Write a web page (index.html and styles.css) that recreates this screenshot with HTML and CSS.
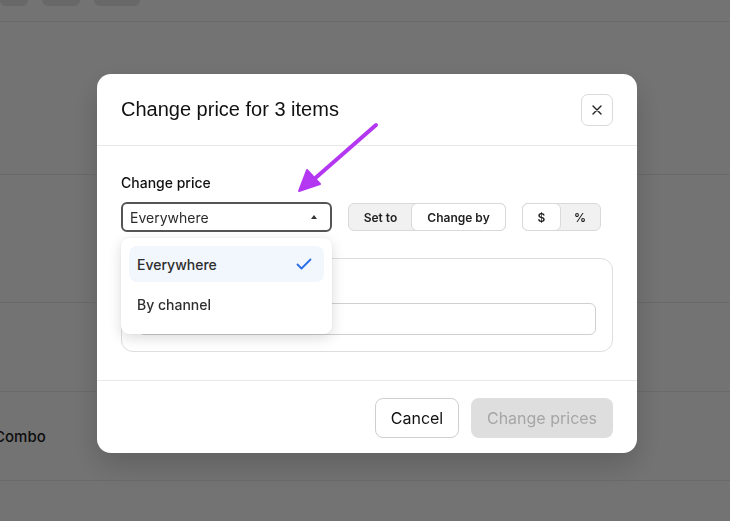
FILE: index.html
```html
<!DOCTYPE html>
<html lang="en">

<head>
    <meta charset="UTF-8" />
    <meta name="viewport" content="width=device-width, initial-scale=1.0" />
    <title>Change price</title>
    <link rel="stylesheet" href="styles.css">
</head>

<body>
    <div class="page">
        <div class="toolbar">
            <span class="pill pill-a"></span>
            <span class="pill pill-b"></span>
            <span class="pill pill-c"></span>
        </div>
        <div class="row row-1"></div>
        <div class="row row-2"></div>
        <div class="row row-3"></div>
        <div class="row row-4"><span class="row-name">Combo</span></div>
        <div class="row row-5"></div>
    </div>

    <div class="overlay">
        <div class="modal">
            <div class="modal-header">
                <h2>Change price for 3 items</h2>
                <button class="btn-close">
                    <svg width="10" height="10" viewBox="0 0 10 10"><path d="M1 1L9 9M9 1L1 9" stroke="#222" stroke-width="1.4" stroke-linecap="round"/></svg>
                </button>
            </div>

            <div class="modal-body">
                <label class="field-label">Change price</label>
                <div class="controls">
                    <div class="select-wrap">
                        <div class="select">
                            <span>Everywhere</span>
                            <svg width="6" height="4" viewBox="0 0 6 4"><path d="M0 4L3 0L6 4Z" fill="#333"/></svg>
                        </div>
                        <div class="dropdown">
                            <div class="option selected">
                                <span>Everywhere</span>
                                <svg width="16" height="12" viewBox="0 0 16 12"><path d="M1.5 6.5L5.5 10.5L14.5 1.5" fill="none" stroke="#2a6de6" stroke-width="1.8" stroke-linecap="round" stroke-linejoin="round"/></svg>
                            </div>
                            <div class="option">By channel</div>
                        </div>
                    </div>

                    <div class="segmented">
                        <span class="seg seg-set">Set to</span>
                        <span class="seg seg-by active">Change by</span>
                    </div>

                    <div class="segmented">
                        <span class="seg seg-dollar active">$</span>
                        <span class="seg seg-pct">%</span>
                    </div>
                </div>

                <div class="amount-card">
                    <div class="amount-label">Amount</div>
                    <div class="amount-input"></div>
                </div>
            </div>

            <div class="modal-footer">
                <button class="btn-cancel">Cancel</button>
                <button class="btn-submit" disabled>Change prices</button>
            </div>
        </div>

        <svg class="pointer" width="100" height="80" viewBox="0 0 100 80">
            <path d="M80 4L16 60" stroke="#b437f2" stroke-width="4" stroke-linecap="round"/>
            <path d="M3 70L11 49L24 63Z" fill="#b437f2" stroke="#b437f2" stroke-width="2" stroke-linejoin="round"/>
        </svg>
    </div>
</body>

</html>
```

FILE: styles.css
```css
* {
    box-sizing: border-box;
    margin: 0;
    padding: 0;
    font-family: Inter, "Noto Sans", Arial, sans-serif;
}

body {
    background-color: #ffffff;
    width: 730px;
    height: 521px;
    overflow: hidden;
}

/* page behind the modal */
.page {
    width: 100%;
}

.toolbar {
    height: 22px;
    border-bottom: 1px solid #ebebeb;
    display: flex;
    gap: 14px;
    align-items: flex-start;
}

.pill {
    display: block;
    height: 6px;
    background-color: #e6e6e6;
    border-radius: 0 0 8px 8px;
}

.pill-a {
    width: 28px;
}

.pill-b {
    width: 38px;
}

.pill-c {
    width: 46px;
}

.row {
    border-bottom: 1px solid #ebebeb;
    display: flex;
    align-items: center;
}

.row-1 {
    height: 153px;
}

.row-2 {
    height: 128px;
}

.row-3 {
    height: 89px;
}

.row-4 {
    height: 89px;
}

.row-5 {
    height: 60px;
    border-bottom: none;
}

.row-name {
    margin-left: -6px;
    font-size: 15px;
    font-weight: 500;
    color: #1d1d1d;
}

/* modal */
.overlay {
    position: fixed;
    top: 0;
    left: 0;
    width: 100%;
    height: 100%;
    background-color: rgba(0, 0, 0, 0.55);
    padding: 74px 0 0 97px;
}

.modal {
    width: 540px;
    background: #fff;
    border-radius: 14px;
    box-shadow: 0 12px 30px rgba(0, 0, 0, 0.18);
}

.modal-header {
    height: 72px;
    display: flex;
    align-items: center;
    justify-content: space-between;
    padding: 0 24px;
    border-bottom: 1px solid #e8e8e8;
}

.modal-header h2 {
    font-family: "Liberation Sans", Arial, sans-serif;
    font-size: 20px;
    font-weight: 400;
    color: #111;
}

.btn-close {
    width: 32px;
    height: 32px;
    border: 1px solid #dadada;
    border-radius: 7px;
    background: #fff;
    display: flex;
    align-items: center;
    justify-content: center;
}

.modal-body {
    padding: 27px 24px 28px 24px;
    border-bottom: 1px solid #e8e8e8;
}

.field-label {
    display: block;
    font-size: 14px;
    line-height: 20px;
    font-weight: 500;
    color: #111;
    margin-bottom: 9px;
}

.controls {
    display: flex;
    align-items: center;
    gap: 16px;
}

.select-wrap {
    position: relative;
}

.select {
    width: 211px;
    height: 30px;
    border: 2px solid #555;
    border-radius: 6px;
    display: flex;
    align-items: center;
    justify-content: space-between;
    padding: 0 13px 0 7px;
    font-size: 14px;
    color: #2b2b2b;
}

.dropdown {
    position: absolute;
    top: 36px;
    left: 0;
    width: 211px;
    background: #fff;
    border-radius: 8px;
    box-shadow: 0 4px 14px rgba(0, 0, 0, 0.14), 0 0 2px rgba(0, 0, 0, 0.08);
    padding: 8px;
    z-index: 10;
}

.option {
    height: 36px;
    display: flex;
    align-items: center;
    justify-content: space-between;
    padding: 0 12px 0 8px;
    border-radius: 8px;
    font-size: 14px;
    font-weight: 500;
    color: #2e2e2e;
    margin-bottom: 4px;
}

.option.selected {
    background-color: #f2f6fd;
}

.segmented {
    display: flex;
    height: 28px;
    background-color: #f1f1f1;
    border: 1px solid #d9d9d9;
    border-radius: 6px;
}

.seg {
    display: flex;
    align-items: center;
    justify-content: center;
    font-size: 12px;
    font-weight: 600;
    color: #222;
}

.seg.active {
    background: #fff;
    border: 1px solid #d9d9d9;
    border-radius: 6px;
    margin: -1px;
}

.seg-set {
    width: 63px;
}

.seg-by {
    width: 95px;
}

.seg-dollar {
    width: 39px;
}

.seg-pct {
    width: 40px;
}

.amount-card {
    margin-top: 26px;
    border: 1px solid #dedede;
    border-radius: 12px;
    padding: 16px;
}

.amount-label {
    font-size: 14px;
    line-height: 20px;
    font-weight: 500;
    color: #1a1a1a;
    margin-bottom: 8px;
}

.amount-input {
    height: 32px;
    border: 1px solid #d0d0d0;
    border-radius: 6px;
}

.modal-footer {
    display: flex;
    justify-content: flex-end;
    gap: 12px;
    padding: 17px 24px 15px 24px;
}

.modal-footer button {
    height: 40px;
    border-radius: 8px;
    font-size: 16px;
    font-weight: 400;
}

.btn-cancel {
    width: 84px;
    background: #fff;
    border: 1px solid #cfcfcf;
    color: #111;
}

.btn-submit {
    width: 142px;
    background: #dedede;
    border: none;
    color: #a6a6a6;
}

.pointer {
    position: absolute;
    left: 296px;
    top: 121px;
}
```
